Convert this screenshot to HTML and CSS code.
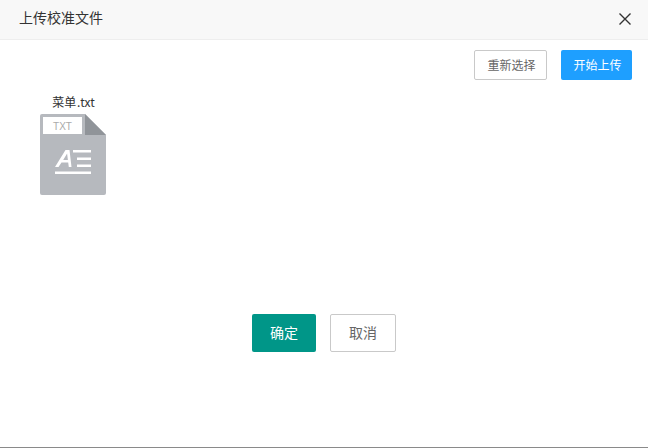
FILE: index.html
```html
<!DOCTYPE html>
<html lang="zh">
<head>
<meta charset="utf-8">
<title>上传校准文件</title>
<link rel="stylesheet" href="styles.css">
</head>
<body>
<div class="dialog">
  <header class="head">
    <span class="title">上传校准文件</span>
    <svg class="close" width="14" height="14" viewBox="0 0 14 14"><path d="M1.500 1.500 12.500 12.500M12.500 1.500 1.500 12.500" stroke="#333" stroke-width="1.400" fill="none"/></svg>
  </header>
  <div class="tools">
    <button class="btn btn-line">重新选择</button>
    <button class="btn btn-blue">开始上传</button>
  </div>
  <div class="file">
    <div class="name">菜单 .txt</div>
    <div class="icon">
      <svg width="66" height="82" viewBox="0 0 66 82">
        <path d="M2 0H45L66 21V79a2 2 0 0 1-2 2H2a2 2 0 0 1-2-2V2a2 2 0 0 1 2-2Z" fill="#b6b9be"/>
        <path d="M45 0 66 21H45Z" fill="#909499"/>
        <rect x="3" y="3" width="39" height="17" fill="#fff"/>
        <path fill-rule="evenodd" d="M15 53 25.500 36H29.500L31.500 53H28.800L28.200 48.500H21.500L18.500 53ZM23.200 46H27.900L27.100 39.500Z" fill="#fff"/>
        <path d="M33 36H51V38.500H33ZM37 43.500H51V46H37ZM37 50.500H51V53H37ZM15 57.500H51V60H15Z" fill="#fff"/>
      </svg>
      <span class="ext">TXT</span>
    </div>
  </div>
  <div class="actions">
    <button class="btn btn-ok">确定</button>
    <button class="btn btn-cancel">取消</button>
  </div>
</div>
</body>
</html>
```
FILE: styles.css
```css
* { box-sizing: border-box; }
html, body { margin: 0; padding: 0; }
body {
  width: 648px;
  height: 448px;
  overflow: hidden;
  background: #fff;
  font-family: "Noto Sans CJK SC", "Liberation Sans", sans-serif;
}
.dialog {
  height: 448px;
  display: flex;
  flex-direction: column;
  border-bottom: 1px solid #8a8a8a;
}
.head {
  height: 40px;
  flex: none;
  background: #f8f8f8;
  border-bottom: 1px solid #eee;
  display: flex;
  align-items: center;
  justify-content: space-between;
  padding: 0 16px 6px 19px;
}
.title { font-size: 14px; color: #333; line-height: 20px; }
.close { display: block; margin-top: 5px; }
.tools {
  display: flex;
  justify-content: flex-end;
  gap: 14px;
  padding: 10px 16px 0 0;
}
.btn {
  font-family: inherit;
  padding: 0 0 3px;
  cursor: pointer;
  line-height: 1;
}
.btn-line, .btn-blue {
  height: 30px;
  padding: 0 0 1px 2px;
  font-size: 12px;
  border-radius: 2px;
}
.btn-line { width: 73px; background: #fff; border: 1px solid #c9c9c9; color: #666; }
.btn-blue { width: 71px; background: #1e9fff; border: 0; color: #fff; }
.file {
  width: 66px;
  margin: 14px 0 0 40px;
  display: flex;
  flex-direction: column;
  align-items: center;
}
.name {
  font-size: 12px;
  line-height: 16px;
  color: #333;
  white-space: pre;
  word-spacing: -2px;
  padding-left: 1px;
}
.icon { position: relative; width: 66px; height: 82px; margin-top: 4px; }
.icon svg { display: block; }
.ext {
  position: absolute;
  left: 3px;
  top: 4px;
  width: 39px;
  text-align: center;
  font: 10px/17px "Liberation Sans", sans-serif;
  color: #aaa;
}
.actions {
  display: flex;
  justify-content: center;
  gap: 14px;
  margin-top: 118px;
}
.btn-ok, .btn-cancel {
  height: 38px;
  font-size: 14px;
  border-radius: 2px;
}
.btn-ok { width: 64px; background: #009688; border: 0; color: #fff; }
.btn-cancel { width: 66px; background: #fff; border: 1px solid #c9c9c9; color: #666; }
```
